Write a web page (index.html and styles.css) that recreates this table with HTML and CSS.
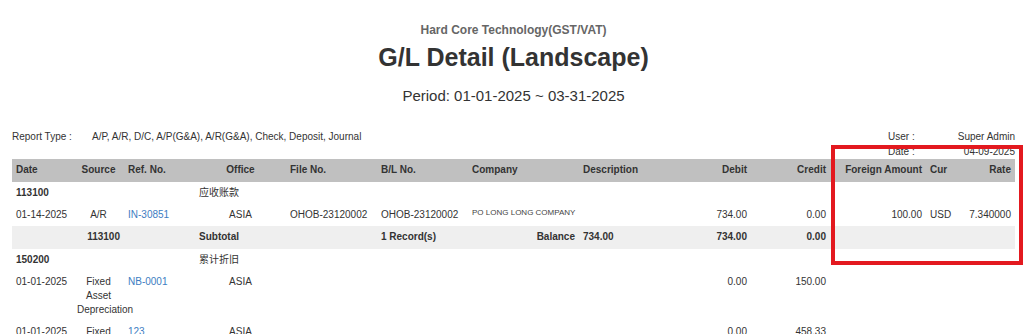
FILE: index.html
```html
<!DOCTYPE html>
<html>
<head>
<meta charset="utf-8">
<link rel="stylesheet" href="styles.css">
</head>
<body>
<div class="page">
  <div class="company">Hard Core Technology(GST/VAT)</div>
  <h1 class="title">G/L Detail (Landscape)</h1>
  <div class="period">Period: 01-01-2025 ~ 03-31-2025</div>
  <div class="info">
    <div class="report-type">
      <span class="rt-label">Report Type :</span>
      <span class="rt-value">A/P, A/R, D/C, A/P(G&amp;A), A/R(G&amp;A), Check, Deposit, Journal</span>
    </div>
    <div class="meta">
      <span>User :</span><span class="meta-val">Super Admin</span>
      <span>Date :</span><span class="meta-val">04-09-2025</span>
    </div>
  </div>
  <table class="gl">
    <colgroup>
      <col class="c-date"><col class="c-source"><col class="c-ref"><col class="c-office">
      <col class="c-file"><col class="c-bl"><col class="c-company"><col class="c-desc">
      <col class="c-debit"><col class="c-credit"><col class="c-fa"><col class="c-cur"><col class="c-rate">
    </colgroup>
    <thead>
      <tr>
        <th>Date</th><th class="c">Source</th><th>Ref. No.</th><th class="c">Office</th>
        <th>File No.</th><th>B/L No.</th><th>Company</th><th>Description</th>
        <th class="r">Debit</th><th class="r">Credit</th><th class="r">Foreign Amount</th><th>Cur</th><th class="r">Rate</th>
      </tr>
    </thead>
    <tbody>
      <tr class="acct">
        <td class="b">113100</td><td></td><td></td><td colspan="4" class="cjk">应收账款</td>
        <td></td><td></td><td></td><td></td><td></td><td></td>
      </tr>
      <tr>
        <td>01-14-2025</td><td class="c">A/R</td><td><a class="ref">IN-30851</a></td><td class="c">ASIA</td>
        <td>OHOB-23120002</td><td>OHOB-23120002</td><td class="co">PO LONG LONG COMPANY</td><td></td>
        <td class="r">734.00</td><td class="r">0.00</td><td class="r">100.00</td><td>USD</td><td class="r">7.340000</td>
      </tr>
      <tr class="sub">
        <td></td><td class="r">113100</td><td></td><td>Subtotal</td>
        <td></td><td>1 Record(s)</td><td class="r">Balance</td><td>734.00</td>
        <td class="r">734.00</td><td class="r">0.00</td><td></td><td></td><td></td>
      </tr>
      <tr class="acct">
        <td class="b">150200</td><td></td><td></td><td colspan="4" class="cjk">累计折旧</td>
        <td></td><td></td><td></td><td></td><td></td><td></td>
      </tr>
      <tr>
        <td>01-01-2025</td><td class="c">Fixed Asset Depreciation</td><td><a class="ref">NB-0001</a></td><td class="c">ASIA</td>
        <td></td><td></td><td></td><td></td>
        <td class="r">0.00</td><td class="r">150.00</td><td></td><td></td><td></td>
      </tr>
      <tr>
        <td>01-01-2025</td><td class="c">Fixed Asset Depreciation</td><td><a class="ref">123</a></td><td class="c">ASIA</td>
        <td></td><td></td><td></td><td></td>
        <td class="r">0.00</td><td class="r">458.33</td><td></td><td></td><td></td>
      </tr>
    </tbody>
  </table>
</div>
<div class="highlight"></div>
</body>
</html>
```

FILE: styles.css
```css
html, body {
  margin: 0;
  padding: 0;
  background: #fff;
}
body {
  font-family: "Liberation Sans", Arial, "Noto Sans CJK SC", sans-serif;
  color: #333;
  position: relative;
  overflow: hidden;
}
.page {
  padding: 23px 15px 0 12px;
}
.company {
  text-align: center;
  font-size: 12px;
  line-height: 14px;
  font-weight: bold;
  color: #666;
}
.title {
  margin: 5px 0 0;
  text-align: center;
  font-size: 25px;
  line-height: 30px;
  font-weight: bold;
  color: #333;
}
.period {
  margin-top: 15px;
  text-align: center;
  font-size: 15px;
  line-height: 18px;
}
.info {
  margin-top: 24px;
  display: flex;
  justify-content: space-between;
  align-items: flex-start;
  font-size: 10px;
  line-height: 15px;
}
.report-type {
  display: flex;
}
.rt-label {
  width: 80px;
}
.meta {
  display: grid;
  grid-template-columns: 50px 77px;
}
.meta-val {
  text-align: right;
}
.gl {
  width: 1003px;
  table-layout: fixed;
  border-collapse: collapse;
  border-spacing: 0;
  font-size: 10px;
  line-height: 14px;
}
.c-date { width: 61px; }
.c-source { width: 51px; }
.c-ref { width: 71px; }
.c-office { width: 91px; }
.c-file { width: 91px; }
.c-bl { width: 91px; }
.c-company { width: 111px; }
.c-desc { width: 92px; }
.c-debit { width: 80px; }
.c-credit { width: 79px; }
.c-fa { width: 96px; }
.c-cur { width: 34px; }
.c-rate { width: 55px; }
.gl th {
  background: #c0c0c0;
  font-weight: bold;
  text-align: left;
  padding: 4px 4px 5px;
  vertical-align: top;
  white-space: nowrap;
}
.gl td {
  padding: 4px;
  vertical-align: top;
  text-align: left;
  white-space: normal;
}
.gl .c { text-align: center; }
.gl .r { text-align: right; }
.gl .b { font-weight: bold; }
.gl .cjk {
  padding-left: 4px;
}
.gl .co {
  font-size: 8px;
  line-height: 9px;
  color: #444;
  white-space: nowrap;
}
.ref {
  color: #3d7dc2;
  text-decoration: none;
}
.gl tr.sub td {
  background: #efefef;
  font-weight: bold;
  padding-bottom: 5px;
}
.highlight {
  position: absolute;
  left: 831px;
  top: 145px;
  width: 184px;
  height: 112px;
  border: 4px solid #e3191f;
  pointer-events: none;
}
```
